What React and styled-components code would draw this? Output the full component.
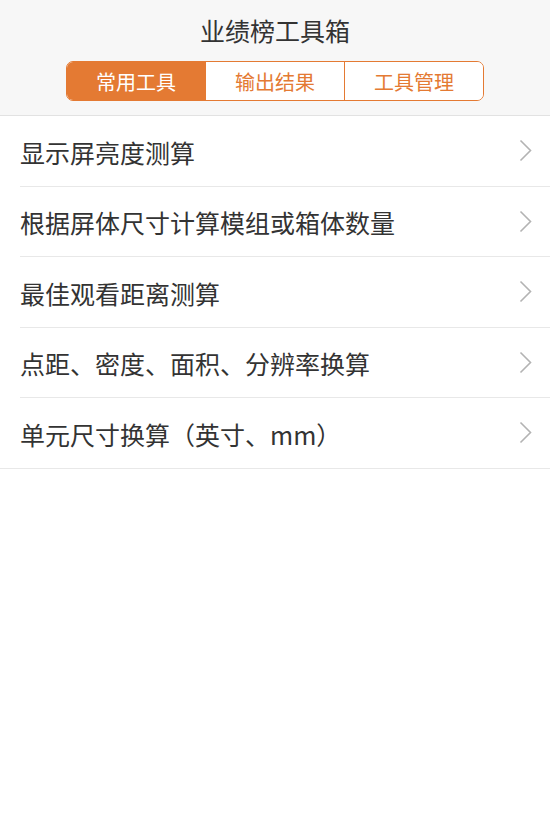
import React, { useState } from 'react';
import styled, { createGlobalStyle } from 'styled-components';

const GlobalStyle = createGlobalStyle`
  html, body {
    margin: 0;
    padding: 0;
    background: #ffffff;
  }
  body {
    font-family: "Noto Sans CJK SC", "Noto Sans", sans-serif;
    color: #333333;
  }
`;

const ORANGE = '#e47a33';

const Header = styled.header`
  background: #f7f7f7;
  border-bottom: 1px solid #e2e2e2;
  height: 116px;
  box-sizing: border-box;
  display: flex;
  flex-direction: column;
  align-items: center;
  padding-top: 13px;
`;

const Title = styled.h1`
  margin: 0;
  font-size: 25px;
  font-weight: 400;
  line-height: 34px;
  color: #333333;
`;

const Segments = styled.div`
  margin-top: 14px;
  display: flex;
  width: 418px;
  height: 40px;
  box-sizing: border-box;
  border: 1.5px solid ${ORANGE};
  border-radius: 7px;
  overflow: hidden;
  background: #ffffff;
`;

const Segment = styled.button`
  flex: 1;
  border: none;
  border-left: ${(p) => (p.first ? 'none' : `1.5px solid ${ORANGE}`)};
  background: ${(p) => (p.active ? ORANGE : '#ffffff')};
  color: ${(p) => (p.active ? '#ffffff' : ORANGE)};
  font-family: inherit;
  font-size: 20px;
  padding: 0;
  cursor: pointer;
  outline: none;
`;

const List = styled.ul`
  list-style: none;
  margin: 0;
  padding: 0;
`;

const Row = styled.li`
  height: 70.5px;
  box-sizing: border-box;
  display: flex;
  align-items: center;
  margin-left: ${(p) => (p.last ? '0' : '20px')};
  padding-left: ${(p) => (p.last ? '20px' : '0')};
  padding-right: 18px;
  border-bottom: 1px solid #e8e8e8;
  cursor: pointer;
`;

const Label = styled.span`
  flex: 1;
  font-size: 25px;
  color: #333333;
  padding-top: 2px;
`;

const Chevron = () => (
  <svg width="13" height="23" viewBox="0 0 13 23" fill="none">
    <path d="M1.5 1.5 L11.5 11.5 L1.5 21.5" stroke="#b3b3b3" strokeWidth="1.6" />
  </svg>
);

const tabs = ['常用工具', '输出结果', '工具管理'];
const tools = [
  '显示屏亮度测算',
  '根据屏体尺寸计算模组或箱体数量',
  '最佳观看距离测算',
  '点距、密度、面积、分辨率换算',
  '单元尺寸换算（英寸、mm）',
];

export default function App() {
  const [tab, setTab] = useState(0);
  return (
    <>
      <GlobalStyle />
      <Header>
        <Title>业绩榜工具箱</Title>
        <Segments>
          {tabs.map((t, i) => (
            <Segment key={t} first={i === 0} active={tab === i} onClick={() => setTab(i)}>
              {t}
            </Segment>
          ))}
        </Segments>
      </Header>
      <List>
        {tools.map((t, i) => (
          <Row key={t} last={i === tools.length - 1}>
            <Label>{t}</Label>
            <Chevron />
          </Row>
        ))}
      </List>
    </>
  );
}
